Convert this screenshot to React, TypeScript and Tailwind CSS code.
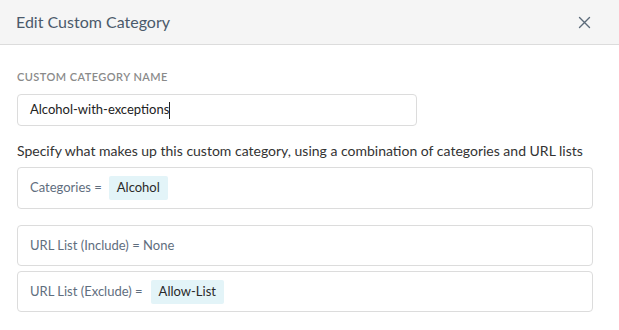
import React from "react";

function CloseIcon() {
  return (
    <svg width="13" height="13" viewBox="0 0 13 13" fill="none" stroke="#5c6b7a" strokeWidth="1.4" strokeLinecap="round">
      <path d="M1.5 1.5 L11.5 11.5 M11.5 1.5 L1.5 11.5" />
    </svg>
  );
}

function Chip({ children }: { children: React.ReactNode }) {
  return (
    <span className="inline-flex items-center h-[24px] px-[8px] bg-[#e3f4f8] text-[#2a2a2a] rounded-[2px]">
      {children}
    </span>
  );
}

export default function App() {
  return (
    <div className="w-[619px] h-[330px] bg-white overflow-hidden" style={{ fontFamily: "Lato, 'Liberation Sans', sans-serif" }}>
      <div className="h-[45px] bg-[#f5f5f5] border-b border-[#dcdcdc] flex items-center justify-between pl-[16px] pr-[28px]">
        <span className="text-[16px] text-[#4b5a6b] leading-none">Edit Custom Category</span>
        <CloseIcon />
      </div>
      <div className="pl-[17px] pr-[26px]">
        <div className="pt-[24px] text-[11px] leading-[16px] font-semibold text-[#8a8a8a] tracking-[0.45px]">CUSTOM CATEGORY NAME</div>
        <div className="mt-[9px] w-[400px] h-[32px] border border-[#dcdcdc] rounded-[4px] flex items-center pl-[12px] text-[13px] text-[#222]">
          Alcohol-with-exceptions<span className="inline-block w-px h-[17px] bg-[#222]" />
        </div>
        <div className="mt-[16px] text-[14px] leading-[18px] text-[#333]">
          Specify what makes up this custom category, using a combination of categories and URL lists
        </div>
        <div className="mt-[7px] h-[42px] border border-[#dcdcdc] rounded-[4px] flex items-center pl-[12px] text-[13px] text-[#5f6e7e] gap-[7px]">
          <span>Categories =</span>
          <Chip>Alcohol</Chip>
        </div>
        <div className="mt-[16px] h-[41px] border border-[#dcdcdc] rounded-[4px] flex items-center pl-[12px] text-[13px] text-[#5f6e7e]">
          <span>URL List (Include) = None</span>
        </div>
        <div className="mt-[5px] h-[41px] border border-[#dcdcdc] rounded-[4px] flex items-center pl-[12px] text-[13px] text-[#5f6e7e] gap-[8px]">
          <span>URL List (Exclude) =</span>
          <Chip>Allow-List</Chip>
        </div>
      </div>
    </div>
  );
}
